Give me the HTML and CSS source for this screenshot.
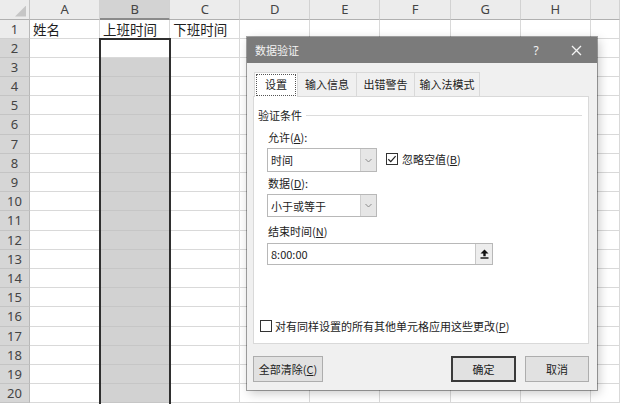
FILE: index.html
```html
<!DOCTYPE html>
<html lang="zh-CN">
<head>
<meta charset="utf-8">
<title>数据验证</title>
<link rel="stylesheet" href="styles.css">
</head>
<body>
<div class="sheet">
  <div class="grid">
    <div class="corner"></div><div class="ch">A</div><div class="ch sel">B</div><div class="ch">C</div><div class="ch">D</div><div class="ch">E</div><div class="ch">F</div><div class="ch">G</div><div class="ch">H</div><div class="ch"></div>
    <div class="rh">1</div><div class="txt">姓名</div><div class="txt">上班时间</div><div class="txt">下班时间</div><div></div><div></div><div></div><div></div><div></div><div></div>
    <div class="rh sel">2</div><div></div><div></div><div></div><div></div><div></div><div></div><div></div><div></div><div></div>
    <div class="rh sel">3</div><div></div><div class="fill"></div><div></div><div></div><div></div><div></div><div></div><div></div><div></div>
    <div class="rh sel">4</div><div></div><div class="fill"></div><div></div><div></div><div></div><div></div><div></div><div></div><div></div>
    <div class="rh sel">5</div><div></div><div class="fill"></div><div></div><div></div><div></div><div></div><div></div><div></div><div></div>
    <div class="rh sel">6</div><div></div><div class="fill"></div><div></div><div></div><div></div><div></div><div></div><div></div><div></div>
    <div class="rh sel">7</div><div></div><div class="fill"></div><div></div><div></div><div></div><div></div><div></div><div></div><div></div>
    <div class="rh sel">8</div><div></div><div class="fill"></div><div></div><div></div><div></div><div></div><div></div><div></div><div></div>
    <div class="rh sel">9</div><div></div><div class="fill"></div><div></div><div></div><div></div><div></div><div></div><div></div><div></div>
    <div class="rh sel">10</div><div></div><div class="fill"></div><div></div><div></div><div></div><div></div><div></div><div></div><div></div>
    <div class="rh sel">11</div><div></div><div class="fill"></div><div></div><div></div><div></div><div></div><div></div><div></div><div></div>
    <div class="rh sel">12</div><div></div><div class="fill"></div><div></div><div></div><div></div><div></div><div></div><div></div><div></div>
    <div class="rh sel">13</div><div></div><div class="fill"></div><div></div><div></div><div></div><div></div><div></div><div></div><div></div>
    <div class="rh sel">14</div><div></div><div class="fill"></div><div></div><div></div><div></div><div></div><div></div><div></div><div></div>
    <div class="rh sel">15</div><div></div><div class="fill"></div><div></div><div></div><div></div><div></div><div></div><div></div><div></div>
    <div class="rh sel">16</div><div></div><div class="fill"></div><div></div><div></div><div></div><div></div><div></div><div></div><div></div>
    <div class="rh sel">17</div><div></div><div class="fill"></div><div></div><div></div><div></div><div></div><div></div><div></div><div></div>
    <div class="rh sel">18</div><div></div><div class="fill"></div><div></div><div></div><div></div><div></div><div></div><div></div><div></div>
    <div class="rh sel">19</div><div></div><div class="fill"></div><div></div><div></div><div></div><div></div><div></div><div></div><div></div>
    <div class="rh sel">20</div><div></div><div class="fill"></div><div></div><div></div><div></div><div></div><div></div><div></div><div></div>
  </div>
  <div class="selection"></div>

  <div class="dialog">
    <div class="titlebar">
      <span class="title">数据验证</span>
      <span class="help">?</span>
      <span class="close"><svg width="11" height="11" viewBox="0 0 11 11"><path d="M1 1L10 10M10 1L1 10" stroke="#f4f4f4" stroke-width="1.3" fill="none"/></svg></span>
    </div>
    <div class="body">
      <div class="tabs">
        <div class="tab active"><span>设置</span></div>
        <div class="tab t2">输入信息</div>
        <div class="tab t3">出错警告</div>
        <div class="tab t4">输入法模式</div>
      </div>
      <div class="panel">
        <div class="legend"><span>验证条件</span><i class="rule"></i></div>
        <div class="fields">
          <div class="label">允许(<u>A</u>):</div>
          <div class="row">
            <div class="select"><span class="val">时间</span><span class="arrow"><svg width="7" height="5" viewBox="0 0 7 5"><path d="M0.5 1L3.5 4L6.5 1" stroke="#8a8a8a" stroke-width="1" fill="none"/></svg></span></div>
            <div class="check ignore"><svg width="12" height="12" viewBox="0 0 12 12"><rect x="0.5" y="0.5" width="11" height="11" fill="#fff" stroke="#333"/><path d="M2.3 6.2L4.8 8.6L9.6 3.2" stroke="#222" stroke-width="1.2" fill="none"/></svg><span>忽略空值(<u>B</u>)</span></div>
          </div>
          <div class="label">数据(<u>D</u>):</div>
          <div class="select s2"><span class="val">小于或等于</span><span class="arrow"><svg width="7" height="5" viewBox="0 0 7 5"><path d="M0.5 1L3.5 4L6.5 1" stroke="#8a8a8a" stroke-width="1" fill="none"/></svg></span></div>
          <div class="label">结束时间(<u>N</u>)</div>
          <div class="input"><span class="val">8:00:00</span><span class="pick"><svg width="9" height="10" viewBox="0 0 9 10"><path d="M4.5 0.5L0.5 4.5H3.3V7.3H5.7V4.5H8.5Z" fill="#111"/><rect x="0.5" y="8.3" width="8" height="1.4" fill="#111"/></svg></span></div>
        </div>
        <div class="check apply"><svg width="12" height="12" viewBox="0 0 12 12"><rect x="0.5" y="0.5" width="11" height="11" fill="#fff" stroke="#333"/></svg><span>对有同样设置的所有其他单元格应用这些更改(<u>P</u>)</span></div>
      </div>
      <div class="footer">
        <div class="btn clear">全部清除(<u>C</u>)</div>
        <div class="btn ok">确定</div>
        <div class="btn cancel">取消</div>
      </div>
    </div>
  </div>
</div>
</body>
</html>
```
FILE: styles.css
```css
html, body {
  margin: 0;
  padding: 0;
  background: #fff;
}
.sheet {
  position: relative;
  width: 620px;
  height: 404px;
  overflow: hidden;
  font-family: "Noto Sans", "Noto Sans CJK SC", sans-serif;
}
.grid {
  display: grid;
  grid-template-columns: 30px repeat(8, 70.1px) 1fr;
  grid-template-rows: 19.5px repeat(20, 19.2px);
}
.grid > div {
  box-sizing: border-box;
  border-right: 1px solid #d9d9d9;
  border-bottom: 1px solid #d9d9d9;
  background: #fff;
}
.grid > .corner {
  position: relative;
  background: #ececec;
  border-right: 1px solid #c4c4c4;
  border-bottom: 1px solid #b0b0b0;
}
.corner::after {
  content: "";
  position: absolute;
  right: 3px;
  bottom: 2px;
  width: 11px;
  height: 11px;
  background: #c6c6c6;
  clip-path: polygon(100% 0, 100% 100%, 0 100%);
}
.grid > .ch {
  background: #ececec;
  border-right: 1px solid #d2d2d2;
  border-bottom: 1px solid #b0b0b0;
  color: #444;
  font-size: 13px;
  line-height: 19px;
  text-align: center;
}
.grid > .ch.sel {
  background: #d3d3d3;
  border-bottom: 2px solid #8a8a8a;
}
.grid > .rh {
  background: #ececec;
  border-right: 1px solid #b8b8b8;
  border-bottom: 1px solid #d0d0d0;
  color: #444;
  font-size: 13px;
  line-height: 19px;
  text-align: center;
}
.grid > .rh.sel {
  background: #d6d6d6;
  border-bottom: 1px solid #c4c4c4;
}
.grid > .txt {
  font-family: "Noto Sans CJK SC", sans-serif;
  font-size: 13.5px;
  line-height: 19px;
  padding-left: 3px;
  color: #1e1e1e;
  white-space: nowrap;
  overflow: visible;
}
.grid > .fill {
  background: #d2d2d2;
  border-bottom: 1px solid #c6c6c6;
}
.selection {
  position: absolute;
  left: 99px;
  top: 38px;
  width: 72px;
  height: 380px;
  box-sizing: border-box;
  border: 2px solid #2f2f2f;
}

/* dialog */
.dialog {
  position: absolute;
  left: 247px;
  top: 37px;
  width: 350px;
  height: 353px;
  background: #f0f0f0;
  box-shadow: 0 0 0 1px rgba(0,0,0,0.35), 2px 3px 10px rgba(0,0,0,0.22);
  display: flex;
  flex-direction: column;
  font-family: "Noto Sans CJK SC", sans-serif;
  font-size: 11px;
  color: #222;
}
.titlebar {
  height: 26px;
  background: #7b7b7b;
  color: #f4f4f4;
  display: flex;
  align-items: center;
  padding-left: 8px;
  flex: none;
}
.title {
  flex: 1;
}
.help {
  width: 20px;
  text-align: center;
  margin-right: 10px;
  font-family: "Noto Sans", sans-serif;
  font-size: 12px;
}
.close {
  width: 40px;
  margin-right: 1px;
  display: flex;
  justify-content: center;
  align-items: center;
}
.body {
  flex: 1;
  display: flex;
  flex-direction: column;
  padding: 9px 8px 0 6px;
}
.tabs {
  display: flex;
  height: 24px;
  margin-left: 1px;
  position: relative;
  z-index: 1;
}
.tab {
  box-sizing: border-box;
  height: 24px;
  line-height: 22px;
  text-align: center;
  border: 1px solid #d9d9d9;
  border-left: none;
  border-bottom: none;
  background: #f0f0f0;
}
.tab.active {
  width: 44px;
  background: #fff;
  border-left: 1px solid #d9d9d9;
  height: 25px;
  padding: 1px;
}
.tab.active span {
  display: block;
  height: 20px;
  line-height: 19px;
  border: 1px dotted #555;
}
.t2 { width: 59px; }
.t3 { width: 58px; }
.t4 { width: 65px; }
.panel {
  box-sizing: border-box;
  height: 248px;
  background: #fff;
  border: 1px solid #d9d9d9;
  display: flex;
  flex-direction: column;
}
.legend {
  display: flex;
  align-items: center;
  margin-top: 10px;
  height: 16px;
  padding-left: 4px;
}
.rule {
  flex: 1;
  height: 1px;
  background: #dcdcdc;
  margin: 0 6px 0 4px;
}
.fields {
  padding-left: 13px;
  display: flex;
  flex-direction: column;
  align-items: flex-start;
}
.label {
  height: 16px;
  line-height: 16px;
  padding-left: 1px;
  margin-top: 6px;
}
.label u, .check u, .btn u {
  text-underline-offset: 1px;
}
.row {
  display: flex;
  align-items: center;
  margin-top: 3px;
}
.select {
  box-sizing: border-box;
  width: 110px;
  height: 24px;
  border: 1px solid #b8b8b8;
  background: #fff;
  display: flex;
}
.select.s2 {
  height: 23px;
  margin-top: 3px;
}
.val {
  flex: 1;
  padding-left: 3px;
  align-self: center;
}
.arrow {
  width: 15px;
  border-left: 1px solid #cfcfcf;
  background: #e6e6e6;
  display: flex;
  align-items: center;
  justify-content: center;
}
.fields .label:nth-of-type(2) {
  margin-top: 4px;
}
.fields .label:nth-of-type(3) {
  margin-top: 3px;
}
.check {
  display: flex;
  align-items: center;
}
.check svg {
  flex: none;
}
.check span {
  margin-left: 4px;
}
.ignore {
  margin-left: 9px;
  margin-top: -3px;
}
.input {
  box-sizing: border-box;
  width: 226px;
  height: 22px;
  margin-top: 4px;
  border: 1px solid #b8b8b8;
  background: #fff;
  display: flex;
}
.pick {
  width: 16px;
  border-left: 1px solid #c8c8c8;
  background: #ededed;
  display: flex;
  align-items: center;
  justify-content: center;
}
.apply {
  margin-top: auto;
  margin-bottom: 9px;
  margin-left: 6px;
  height: 16px;
}
.apply span {
  margin-left: 3px;
}
.footer {
  display: flex;
  margin-top: 12px;
}
.btn {
  box-sizing: border-box;
  height: 26px;
  line-height: 24px;
  text-align: center;
  background: #e1e1e1;
  border: 1px solid #adadad;
}
.clear {
  width: 70px;
}
.ok {
  width: 65px;
  margin-left: auto;
  border: 2px solid #3a3a3a;
  line-height: 22px;
}
.cancel {
  width: 64px;
  margin-left: 9px;
}
```
